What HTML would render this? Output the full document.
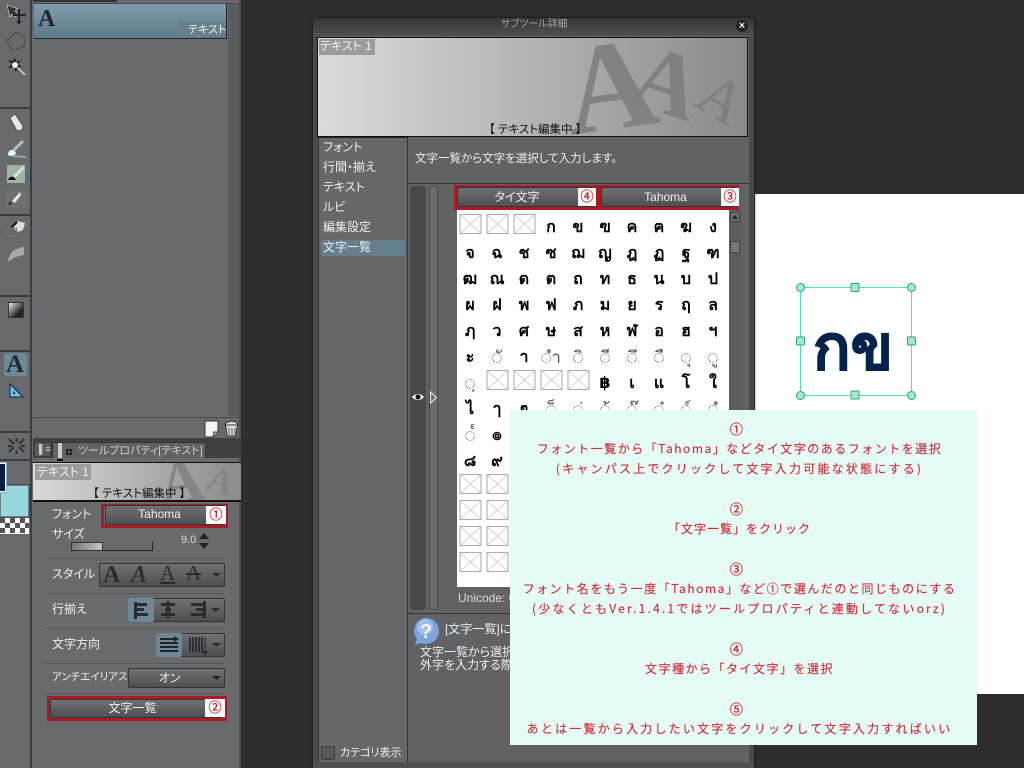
<!DOCTYPE html>
<html lang="ja"><head><meta charset="utf-8"><title>サブツール詳細</title>
<style>
html,body{margin:0;padding:0;width:1024px;height:768px;overflow:hidden;background:#2e2e2e}
body{position:relative;font-family:"Liberation Sans","Noto Sans CJK JP",sans-serif;font-size:12px;color:#eee;font-feature-settings:"palt"}
.b,.t{position:absolute}
.t{white-space:nowrap;line-height:14px}
.btn{position:absolute;background:linear-gradient(#707174,#4e4f52);border:1px solid #333;border-radius:2px;box-sizing:border-box;text-align:center;color:#eee;font-size:12px}
.red{position:absolute;border:3px solid #a81c28;box-sizing:border-box}
.num{position:absolute;background:#eefbf8;color:#c8202c;text-align:center;font-size:13px;line-height:17px;-webkit-text-stroke:.3px #c8202c}
.ln{position:absolute;left:506px;width:467px;text-align:center;height:20px;line-height:20px;color:#d22f3d;font-size:12px;letter-spacing:2.2px;white-space:nowrap;font-family:"WenQuanYi Zen Hei","Noto Sans CJK JP",sans-serif;-webkit-text-stroke:.15px #d22f3d;font-feature-settings:normal}
.c{left:504px;font-size:13px;-webkit-text-stroke:.4px #d22f3d}
.sep{position:absolute;left:44px;width:180px;height:1px;background:#55565a}
.side{position:absolute;left:323px;font-size:12px;line-height:14px;color:#eee}
.thin{font-weight:400;fill:#555;font-size:17px}
</style></head><body>

<!-- left toolbar -->
<div class="b" style="left:0;top:0;width:31px;height:768px;background:#68696c"></div>
<div class="b" style="left:30px;top:0;width:2px;height:768px;background:#3c3d40"></div>
<div class="b" style="left:0;top:107px;width:31px;height:2px;background:#3c3d40"></div>
<div class="b" style="left:0;top:214px;width:31px;height:2px;background:#3c3d40"></div>
<div class="b" style="left:0;top:295px;width:31px;height:2px;background:#3c3d40"></div>
<div class="b" style="left:0;top:350px;width:31px;height:2px;background:#3c3d40"></div>
<div class="b" style="left:0;top:431px;width:31px;height:2px;background:#3c3d40"></div>
<div class="b" style="left:0;top:459px;width:31px;height:2px;background:#3c3d40"></div>

<svg class="b" style="left:0;top:0" width="32" height="540" viewBox="0 0 32 540">
<defs><linearGradient id="gr" x1="0" y1="0" x2="1" y2="1"><stop offset="0" stop-color="#f0f0f0"/><stop offset=".7" stop-color="#222"/></linearGradient></defs>
<path d="M7 5l11 4-3 2 3 3-3 3-3-3-2 3z" fill="#333" stroke="#ddd" stroke-width=".6"/>
<path d="M13 15h12M19 9v15" stroke="#222" stroke-width="2"/><path d="M25 12l1 3-1 3zM16 21l3 3 3-3z" fill="#222"/>
<path d="M7 40l9-8 9 6-1 9-12 3z" fill="none" stroke="#333" stroke-dasharray="2 1.500"/>
<path d="M15 57l1 5 5-2-3 4 4 3-5 0-1 6-2-6-6 1 4-4-4-4 5 1z" fill="#222"/>
<circle cx="15" cy="65" r="3" fill="#eee"/><path d="M18 68l7 7" stroke="#ddd" stroke-width="1.500"/>
<path d="M10 118l5-4 8 12-1 4-5 1z" fill="#e8e8e8" stroke="#555"/>
<path d="M23 141l-9 9" stroke="#bbb" stroke-width="3"/><path d="M8 155c0-4 3-6 6-5l2 3c-1 3-4 4-8 2z" fill="#dff"/><path d="M12 156l14 1" stroke="#8ab" stroke-width="2"/>
<rect x="7" y="165" width="18" height="18" fill="#9eb5a2"/><path d="M24 167l-10 10" stroke="#ddd" stroke-width="3"/><path d="M8 180c1-3 4-4 6-3l2 3z" fill="#111"/>
<rect x="6" y="190" width="20" height="18" fill="#6f7073"/><path d="M20 192l-8 9 3 2 6-8z" fill="#e8e8e8"/><path d="M11 202l-2 3" stroke="#222" stroke-width="2"/>
<path d="M12 227l6-6 7 2-2 7-5 2z" fill="#ddd"/><path d="M11 228l6-6" stroke="#111" stroke-width="2"/><rect x="7.500" y="228" width="9" height="8" fill="none" stroke="#777"/>
<path d="M8 262c1-10 7-14 16-15l0 8c-7 1-11 3-16 7z" fill="#a8a9ab"/>
<rect x="8.500" y="302.500" width="15" height="15" fill="url(#gr)" stroke="#333"/>
<rect x="4" y="353" width="23" height="23" rx="2" fill="#6d8998"/>
<path d="M10 384l0 13 13 0z" fill="#6cc4ec" stroke="#123"/><path d="M13 391v3h3z" fill="#234"/>
<g stroke="#333" stroke-width="2"><path d="M9 439l5 5M24 439l-5 5M9 452l5-5M24 452l-5-5M16.500 438v4M16.500 450v4M8 446h4M21 446h4"/></g>
<rect x="0" y="485" width="29" height="32" fill="#99d7de" stroke="#333"/>
<rect x="0" y="462" width="7" height="32" fill="#8cb8cc"/>
<rect x="-1" y="463.500" width="6.500" height="28" fill="#0c1c40" stroke="#fff"/>
<rect x="0" y="518" width="29" height="16" fill="#fff"/>
<path fill="#555" d="M0 518h5v5h-5zM10 518h5v5h-5zM20 518h5v5h-5zM5 523h5v5h-5zM15 523h5v5h-5zM25 523h4v5h-4zM0 528h5v5h-5zM10 528h5v5h-5zM20 528h5v5h-5z"/>
</svg>
<div class="t" style="left:3px;top:347px;width:24px;text-align:center;font:bold 25px/36px 'Liberation Serif',serif;color:#1e2a33">A</div>

<!-- tool panel -->
<div class="b" style="left:32px;top:0;width:209px;height:768px;background:#696a6d"></div>
<div class="b" style="left:33px;top:0;width:84px;height:2px;background:#333"></div>
<div class="b" style="left:33px;top:3px;width:208px;height:1px;background:#4a4b4e"></div>
<div class="b" style="left:228px;top:4px;width:12px;height:412px;background:#5b5c5f"></div>
<div class="b" style="left:239px;top:0;width:2px;height:768px;background:#4e4f52"></div>
<div class="b" style="left:34px;top:4px;width:193px;height:35px;background:linear-gradient(#7f9bab,#5d7a8a);border-bottom:1px solid #1f2a30;border-right:1px solid #1f2a30;box-sizing:border-box"></div>
<div class="t" style="left:38px;top:3px;font:bold 24px/32px 'Liberation Serif',serif;color:#1c2730">A</div>
<div class="b" style="left:179px;top:21px;width:47px;height:16px;background:#697f8d"></div>
<div class="t" style="left:188px;top:23px;font-size:11px">テキスト</div>
<div class="b" style="left:33px;top:417px;width:208px;height:1px;background:#47484b"></div>
<svg class="b" style="left:200px;top:418px" width="42" height="22" viewBox="0 0 42 22">
<path d="M5 3h13v11l-5 5h-8z" fill="#f4f4f4" stroke="#333"/><path d="M13 19l1-5h4" fill="#bbb" stroke="#333"/>
<path d="M25 7c1-5 12-5 13 0l-1 2-1 9h-9l-1-9z" fill="#ddd" stroke="#333"/><path d="M29 10v7M32 10v7M35 10v7" stroke="#555"/><path d="M25 7h13" stroke="#333"/>
</svg>
<div class="b" style="left:33px;top:438px;width:208px;height:2px;background:#3e3f42"></div>
<div class="b" style="left:33px;top:440px;width:208px;height:18px;background:#3f4043"></div>
<div class="b" style="left:52px;top:442px;width:154px;height:16px;background:#616265;border:1px solid #333;border-bottom:0;box-sizing:border-box"></div>
<div class="b" style="left:35px;top:443px;width:15px;height:13px;background:#5a5b5e"></div>
<div class="t" style="left:39px;top:442px;font-size:9px;color:#ccc">▌≡</div>
<svg class="b" style="left:55px;top:442px" width="20" height="20" viewBox="0 0 20 20"><path d="M5 1v15" stroke="#ccc" stroke-width="4"/><path d="M2 18h6" stroke="#111" stroke-width="2"/><circle cx="14" cy="10" r="3.500" fill="#111"/><path d="M10 10h8M14 6v8" stroke="#aaa" stroke-width=".6"/></svg>
<div class="t" style="left:78px;top:444px;font-size:11px;color:#ccc">ツールプロパティ[テキスト]</div>
<div class="b" style="left:33px;top:462px;width:208px;height:40px;background:linear-gradient(90deg,#dadada,#8b8b8b);border-top:1px solid #111;border-bottom:2px solid #111;box-sizing:border-box;overflow:hidden">
<div class="t" style="left:126px;top:-16px;font:bold 62px/70px 'Liberation Serif',serif;color:#858585;transform:rotate(-8deg)">A</div>
<div class="t" style="left:175px;top:-2px;font:bold 36px/40px 'Liberation Serif',serif;color:#858585;transform:rotate(20deg)">A</div>
</div>
<div class="b" style="left:35px;top:464px;width:56px;height:16px;background:#9c9c9c"></div>
<div class="t" style="left:37px;top:465px;color:#f0f0f0">テキスト 1</div>
<div class="t" style="left:93px;top:487px;color:#111;font-size:11.500px">【 テキスト編集中 】</div>

<div class="t" style="left:52px;top:507px">フォント</div>
<div class="red" style="left:101px;top:504px;width:127px;height:24px"></div>
<div class="btn" style="left:105px;top:505px;width:119px;height:20px;line-height:17px;padding-right:10px">Tahoma</div>
<div class="num" style="left:206px;top:506px;width:20px;height:18px">①</div>
<div class="t" style="left:52px;top:527px">サイズ</div>
<div class="b" style="left:71px;top:542px;width:82px;height:9px;border-bottom:1px solid #222;border-right:1px solid #222;box-sizing:border-box"></div>
<div class="b" style="left:71px;top:542px;width:32px;height:9px;background:linear-gradient(90deg,#777,#c4c4c4);border:1px solid #333;box-sizing:border-box"></div>
<div class="t" style="left:181px;top:533px;font-size:11px;color:#ddd">9.0</div>
<svg class="b" style="left:198px;top:532px" width="12" height="18" viewBox="0 0 12 18"><path d="M1 7l5-6 5 6zM1 11l5 6 5-6z" fill="#222"/></svg>
<div class="sep" style="top:558px"></div>
<div class="t" style="left:52px;top:567px">スタイル</div>
<div class="btn" style="left:99px;top:563px;width:126px;height:24px"></div>
<div class="t" style="left:103px;top:562px;font:bold 24px/26px 'Liberation Serif',serif;color:#2a2b2d">A</div>
<div class="t" style="left:131px;top:562px;font:italic bold 24px/26px 'Liberation Serif',serif;color:#2e2f31">A</div>
<div class="t" style="left:160px;top:561px;font:21px/24px 'Liberation Serif',serif;color:#2a2b2d;text-decoration:underline">A</div>
<div class="t" style="left:186px;top:561px;font:21px/24px 'Liberation Serif',serif;color:#2a2b2d;text-decoration:line-through">A</div>
<div class="sep" style="top:593px"></div>
<div class="t" style="left:52px;top:602px">行揃え</div>
<div class="btn" style="left:128px;top:598px;width:97px;height:24px"></div>
<div class="b" style="left:128px;top:598px;width:26px;height:24px;background:#6c8797;border-radius:2px"></div>
<svg class="b" style="left:128px;top:598px" width="97" height="24" viewBox="0 0 97 24"><g fill="#2a2b2d"><path d="M6 4h3v17H6zM9 5h10v3H9zM9 10h7v3H9zM9 15h11v3H9z"/><path d="M33 5h14v3H33zM37 10h6v3h-6zM33 15h14v3H33zM38.500 3h3v17h-3z"/><path d="M63 5h13v3H63zM68 10h8v3h-8zM63 15h13v3H63zM75 3h3v17h-3z"/><path d="M83 10h9l-4.500 4z"/></g></svg>
<div class="sep" style="top:628px"></div>
<div class="t" style="left:52px;top:637px">文字方向</div>
<div class="btn" style="left:156px;top:633px;width:69px;height:24px"></div>
<div class="b" style="left:156px;top:633px;width:26px;height:24px;background:#6c8797;border-radius:2px"></div>
<svg class="b" style="left:156px;top:633px" width="69" height="24" viewBox="0 0 69 24"><path d="M4 6h14M4 10h18M4 14h18M4 18h18" stroke="#222" stroke-width="2"/><path d="M18 3l5 3-5 3z" fill="#222"/><path d="M34 4v15M37 4v15M40 4v15M43 4v15M46 4v15" stroke="#2a2b2d" stroke-width="1.800"/><path d="M49 4v15" stroke="#2a2b2d"/><path d="M46 18l3 5 3-5z" fill="#2a2b2d"/><path d="M56 10h9l-4.500 4z" fill="#2a2b2d"/></svg>
<div class="sep" style="top:663px"></div>
<div class="t" style="left:52px;top:670px;font-size:10.500px">アンチエイリアス</div>
<div class="btn" style="left:128px;top:668px;width:97px;height:20px;line-height:18px;padding-right:14px">オン</div>
<svg class="b" style="left:211px;top:674px" width="12" height="8"><path d="M1 2h9l-4.500 4z" fill="#222"/></svg>
<svg class="b" style="left:211px;top:571px" width="12" height="8"><path d="M1 2h9l-4.500 4z" fill="#2a2b2d"/></svg>
<div class="sep" style="top:693px"></div>
<div class="red" style="left:47px;top:696px;width:180px;height:25px"></div>
<div class="btn" style="left:50px;top:699px;width:173px;height:19px;line-height:17px;padding-right:8px">文字一覧</div>
<div class="num" style="left:205px;top:699px;width:20px;height:18px">②</div>

<!-- canvas -->
<div class="b" style="left:755px;top:194px;width:269px;height:500px;background:#fff"></div>
<svg class="b" style="left:790px;top:276px" width="135" height="130" viewBox="0 0 135 130">
<rect x="10.500" y="11.500" width="111" height="108" fill="none" stroke="#55d8d0"/>
<g fill="#a0ecc8" stroke="#2f9f80">
<circle cx="10.500" cy="11.500" r="4"/><circle cx="121.500" cy="11.500" r="4"/><circle cx="10.500" cy="119.500" r="4"/><circle cx="121.500" cy="119.500" r="4"/>
<rect x="61" y="7.500" width="8" height="8" rx="1"/><rect x="61" y="115" width="8" height="8" rx="1"/><rect x="6.500" y="61" width="8" height="8" rx="1"/><rect x="117.500" y="61" width="8" height="8" rx="1"/>
</g>
</svg>
<div class="t" style="left:793px;top:314px;width:120px;text-align:center;font-weight:700;font-size:62px;line-height:70px;color:#04234a;-webkit-text-stroke:1px #04234a">กข</div>

<!-- dialog -->
<div class="b" style="left:313px;top:18px;width:441px;height:750px;background:#616265;box-shadow:0 0 3px #111"></div>
<div class="b" style="left:313px;top:36px;width:5px;height:732px;background:#4a4b4e"></div>
<div class="b" style="left:749px;top:36px;width:5px;height:732px;background:#4a4b4e"></div>
<div class="b" style="left:313px;top:18px;width:441px;height:18px;background:linear-gradient(#333,#505154)"></div>
<div class="t" style="left:501px;top:18px;font-size:10px;color:#a5a5a5">サブツール詳細</div>
<div class="b" style="left:736px;top:20px;width:12px;height:12px;border-radius:6px;background:#222"></div>
<div class="t" style="left:736px;top:19px;width:12px;text-align:center;font:bold 11px/14px 'Liberation Sans',sans-serif;color:#eee">×</div>
<div class="b" style="left:317px;top:37px;width:431px;height:100px;background:linear-gradient(90deg,#dcdcdc,#8a8a8a);border:1px solid #111;box-sizing:border-box;overflow:hidden">
<div class="t" style="left:246px;top:-12px;font:bold 128px/120px 'Liberation Serif',serif;color:#828282;transform:rotate(-8deg)">A</div>
<div class="t" style="left:316px;top:-6px;font:bold 92px/100px 'Liberation Serif',serif;color:#808080;transform:rotate(18deg)">A</div>
<div class="t" style="left:382px;top:26px;font:60px/70px 'Liberation Serif',serif;color:#7f7f7f;transform:rotate(32deg)">A</div>
</div>
<div class="b" style="left:319px;top:39px;width:56px;height:16px;background:#9c9c9c"></div>
<div class="t" style="left:320px;top:39px;color:#f0f0f0">テキスト 1</div>
<div class="t" style="left:489px;top:123px;color:#111;font-size:11.500px">【 テキスト編集中 】</div>

<div class="b" style="left:318px;top:137px;width:90px;height:625px;background:#66676a;border-left:1px solid #333;border-right:1px solid #333;box-sizing:border-box"></div>
<div class="b" style="left:318px;top:137px;width:90px;height:1px;background:#222"></div>
<div class="b" style="left:321px;top:240px;width:84px;height:16px;background:#667f8e;border-radius:2px"></div>
<div class="side" style="top:140px">フォント</div>
<div class="side" style="top:160px">行間・揃え</div>
<div class="side" style="top:180px">テキスト</div>
<div class="side" style="top:200px">ルビ</div>
<div class="side" style="top:220px">編集設定</div>
<div class="side" style="top:240px">文字一覧</div>
<div class="b" style="left:321px;top:746px;width:14px;height:14px;background:#58595c;border:1px solid #3a3b3e;border-radius:2px;box-sizing:border-box"></div>
<div class="t" style="left:340px;top:746px;font-size:11px">カテゴリ表示</div>
<div class="b" style="left:313px;top:762px;width:441px;height:6px;background:#4f5053"></div>

<div class="t" style="left:415px;top:152px;font-size:11.500px">文字一覧から文字を選択して入力します。</div>
<div class="b" style="left:408px;top:183px;width:342px;height:1px;background:#333"></div>
<div class="b" style="left:410px;top:186px;width:16px;height:424px;background:#47484b;border-radius:3px"></div>
<div class="b" style="left:429px;top:186px;width:9px;height:424px;background:#6c6d70;border:1px solid #47484b;border-radius:3px;box-sizing:border-box"></div>
<svg class="b" style="left:411px;top:391px" width="14" height="12" viewBox="0 0 14 12"><path d="M1 6c3-4 9-4 12 0-3 4-9 4-12 0z" fill="#eee"/><circle cx="7" cy="6" r="2.500" fill="#111"/></svg>
<svg class="b" style="left:429px;top:391px" width="9" height="13"><path d="M1.500 1l6 5.500-6 5.500z" fill="none" stroke="#eee"/></svg>
<div class="b" style="left:408px;top:613px;width:342px;height:1px;background:#333"></div>

<!-- char grid -->
<div class="b" style="left:457px;top:210px;width:272px;height:377px;background:#fff"></div>
<div class="b" style="left:729px;top:210px;width:12px;height:377px;background:#5b5c5f"></div>
<div class="b" style="left:730px;top:212px;width:10px;height:10px;background:#6d6e71;border:1px solid #444;box-sizing:border-box"></div>
<svg class="b" style="left:732px;top:214px" width="6" height="5"><path d="M0 5l3-4 3 4z" fill="#222"/></svg>
<div class="b" style="left:730px;top:241px;width:10px;height:12px;background:#76777a;border:1px solid #444;box-sizing:border-box"></div>
<svg class="b" style="left:457px;top:210px" width="272" height="377" viewBox="457 210 272 377">
<defs><g id="x"><rect x="-10.500" y="-9.500" width="21" height="19" fill="#fff" stroke="#aaa"/><path d="M-10 -9L10 9M10 -9L-10 9" stroke="#bbb" stroke-width=".6"/></g></defs>
<use href="#x" x="470.500" y="224"/><use href="#x" x="497.500" y="224"/><use href="#x" x="524.500" y="224"/>
<use href="#x" x="497.500" y="380"/><use href="#x" x="524.500" y="380"/><use href="#x" x="551.500" y="380"/><use href="#x" x="578.500" y="380"/>
<use href="#x" x="470.500" y="484"/><use href="#x" x="497.500" y="484"/><use href="#x" x="470.500" y="510"/><use href="#x" x="497.500" y="510"/><use href="#x" x="470.500" y="536"/><use href="#x" x="497.500" y="536"/><use href="#x" x="470.500" y="562"/><use href="#x" x="497.500" y="562"/>
<g font-family="Liberation Sans,DejaVu Sans,sans-serif" font-weight="700" font-size="16" text-anchor="middle" fill="#000">
<text x="551" y="232">ก</text><text x="578" y="232">ข</text><text x="605" y="232">ฃ</text><text x="632" y="232">ค</text><text x="659" y="232">ฅ</text><text x="686" y="232">ฆ</text><text x="713" y="232">ง</text>
<text x="470" y="258">จ</text><text x="497" y="258">ฉ</text><text x="524" y="258">ช</text><text x="551" y="258">ซ</text><text x="578" y="258">ฌ</text><text x="605" y="258">ญ</text><text x="632" y="258">ฎ</text><text x="659" y="258">ฏ</text><text x="686" y="258">ฐ</text><text x="713" y="258">ฑ</text>
<text x="470" y="284">ฒ</text><text x="497" y="284">ณ</text><text x="524" y="284">ด</text><text x="551" y="284">ต</text><text x="578" y="284">ถ</text><text x="605" y="284">ท</text><text x="632" y="284">ธ</text><text x="659" y="284">น</text><text x="686" y="284">บ</text><text x="713" y="284">ป</text>
<text x="470" y="310">ผ</text><text x="497" y="310">ฝ</text><text x="524" y="310">พ</text><text x="551" y="310">ฟ</text><text x="578" y="310">ภ</text><text x="605" y="310">ม</text><text x="632" y="310">ย</text><text x="659" y="310">ร</text><text x="686" y="310">ฤ</text><text x="713" y="310">ล</text>
<text x="470" y="336">ฦ</text><text x="497" y="336">ว</text><text x="524" y="336">ศ</text><text x="551" y="336">ษ</text><text x="578" y="336">ส</text><text x="605" y="336">ห</text><text x="632" y="336">ฬ</text><text x="659" y="336">อ</text><text x="686" y="336">ฮ</text><text x="713" y="336">ฯ</text>
<text x="470" y="362">ะ</text><text x="524" y="362">า</text>
<text x="605" y="388">฿</text><text x="632" y="388">เ</text><text x="659" y="388">แ</text><text x="686" y="388">โ</text><text x="713" y="388">ใ</text>
<text x="470" y="414">ไ</text><text x="497" y="414">ๅ</text><text x="524" y="414">ๆ</text>
<text x="497" y="440">๏</text>
<text x="470" y="466">๘</text><text x="497" y="466">๙</text>
<g class="thin">
<text x="497" y="363">◌ั</text><text x="551" y="363">◌ำ</text><text x="578" y="363">◌ิ</text><text x="605" y="363">◌ี</text><text x="632" y="363">◌ึ</text><text x="659" y="363">◌ื</text><text x="686" y="363">◌ุ</text><text x="713" y="363">◌ู</text>
<text x="470" y="389">◌ฺ</text>
<text x="551" y="415">◌็</text><text x="578" y="415">◌่</text><text x="605" y="415">◌้</text><text x="632" y="415">◌๊</text><text x="659" y="415">◌๋</text><text x="686" y="415">◌์</text><text x="713" y="415">◌ํ</text>
<text x="470" y="441">◌๎</text>
</g>
</g></svg>
<div class="t" style="left:458px;top:591px;color:#ddd">Unicode: 0</div>

<div class="red" style="left:454px;top:185px;width:144px;height:25px"></div>
<div class="red" style="left:598px;top:185px;width:141px;height:25px"></div>
<div class="btn" style="left:457px;top:187px;width:138px;height:20px;line-height:18px;padding-right:18px">タイ文字</div>
<div class="btn" style="left:601px;top:187px;width:135px;height:20px;line-height:18px;padding-right:6px">Tahoma</div>
<div class="num" style="left:578px;top:188px;width:18px;height:18px">④</div>
<div class="num" style="left:721px;top:188px;width:18px;height:18px">③</div>

<!-- help -->
<svg class="b" style="left:412px;top:617px" width="30" height="28" viewBox="0 0 30 28"><path d="M14 1a13 13 0 1 1-5 25l-6 2 2-6A13 13 0 0 1 14 1z" fill="#7ea4e0"/><circle cx="13" cy="10" r="8" fill="#b8d0f2" opacity=".6"/><text x="14" y="21" font-family="Liberation Sans,sans-serif" font-weight="700" font-size="20" text-anchor="middle" fill="#f4f4f4">?</text></svg>
<div class="t" style="left:445px;top:622px">[文字一覧]について</div>
<div class="t" style="left:420px;top:645px">文字一覧から選択</div>
<div class="t" style="left:420px;top:658px">外字を入力する際</div>

<!-- annotation -->
<div class="b" style="left:510px;top:410px;width:467px;height:335px;background:#e4fbf6"></div>
<div class="ln c" style="top:419px">①</div>
<div class="ln" style="top:439px;letter-spacing:1.5px">フォント一覧から「Tahoma」などタイ文字のあるフォントを選択</div>
<div class="ln" style="top:459px">(キャンパス上でクリックして文字入力可能な状態にする)</div>
<div class="ln c" style="top:499px">②</div>
<div class="ln" style="top:519px;letter-spacing:1px">「文字一覧」をクリック</div>
<div class="ln c" style="top:559px">③</div>
<div class="ln" style="top:579px;letter-spacing:1.55px">フォント名をもう一度「Tahoma」など①で選んだのと同じものにする</div>
<div class="ln" style="top:599px">(少なくともVer.1.4.1ではツールプロパティと連動してないorz)</div>
<div class="ln c" style="top:639px">④</div>
<div class="ln" style="top:659px;letter-spacing:1.5px">文字種から「タイ文字」を選択</div>
<div class="ln c" style="top:699px">⑤</div>
<div class="ln" style="top:719px">あとは一覧から入力したい文字をクリックして文字入力すればいい</div>
</body></html>
